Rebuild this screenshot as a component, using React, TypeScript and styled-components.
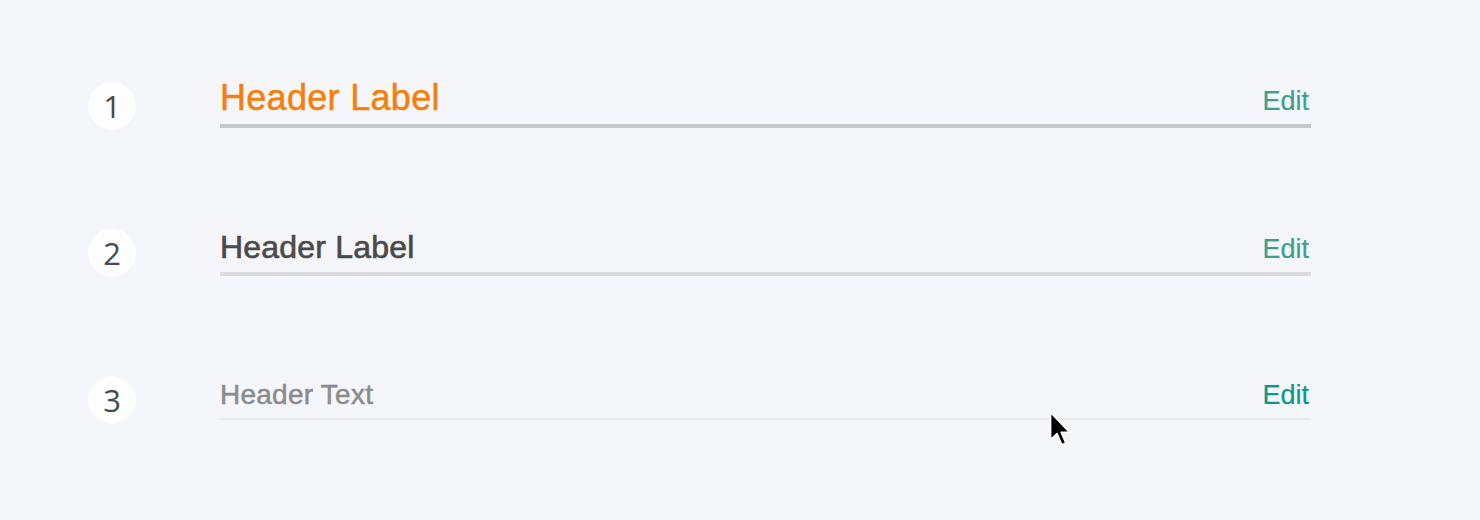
import React from "react";
import styled, { createGlobalStyle } from "styled-components";

const Global = createGlobalStyle`
  html, body {
    margin: 0;
    padding: 0;
    background: #f5f6fa;
  }
  body {
    font-family: "Liberation Sans", Arial, sans-serif;
    width: 1480px;
    height: 520px;
    overflow: hidden;
  }
`;

type Variant = "active" | "filled" | "empty";

const titleStyles: Record<
  Variant,
  { size: number; color: string; pb: number; border: number; line: string; edit: string; lift: number; stroke: number; ls: number }
> = {
  active: { size: 36, color: "#f57f0a", pb: 7.5, border: 4, line: "#c7c7c7", edit: "#3f9f8f", lift: 2.25, stroke: 0.5, ls: 0.3 },
  filled: { size: 32, color: "#4a4a4a", pb: 9, border: 4, line: "#dcdcdc", edit: "#3f9f8f", lift: -0.75, stroke: 0.65, ls: 0.2 },
  empty: { size: 28, color: "#8b8b8b", pb: 9.7, border: 2, line: "#eaeaea", edit: "#0c978a", lift: -0.5, stroke: 0.5, ls: 0.25 },
};

const Page = styled.div`
  position: relative;
  box-sizing: border-box;
  width: 1480px;
  height: 520px;
  padding: 32.5px 169px 0 88px;
  display: flex;
  flex-direction: column;
`;

const Row = styled.div`
  height: 147px;
  display: flex;
  align-items: center;
  gap: 84px;
`;

const StepCircle = styled.div`
  flex: 0 0 48px;
  width: 48px;
  height: 48px;
  border-radius: 50%;
  background: #fdfdfe;
  display: flex;
  align-items: center;
  justify-content: center;
  font-family: "Open Sans", "Noto Sans", sans-serif;
  font-size: 31px;
  color: #4a4a4a;
  line-height: 1;
`;

const Content = styled.div<{ $v: Variant }>`
  flex: 1;
  margin-bottom: ${(p) => Math.max(0, titleStyles[p.$v].lift * 2)}px;
  margin-top: ${(p) => Math.max(0, -titleStyles[p.$v].lift * 2)}px;
`;

const TitleRow = styled.div<{ $v: Variant }>`
  display: flex;
  justify-content: space-between;
  align-items: baseline;
  padding-bottom: ${(p) => titleStyles[p.$v].pb}px;
  border-bottom: ${(p) => titleStyles[p.$v].border}px solid ${(p) => titleStyles[p.$v].line};
`;

const Title = styled.span<{ $v: Variant }>`
  font-size: ${(p) => titleStyles[p.$v].size}px;
  line-height: 1;
  letter-spacing: ${(p) => titleStyles[p.$v].ls}px;
  color: ${(p) => titleStyles[p.$v].color};
  -webkit-text-stroke: ${(p) => titleStyles[p.$v].stroke}px currentColor;
`;

const EditLink = styled.a<{ $v: Variant }>`
  font-size: 27px;
  line-height: 1;
  margin-right: 2px;
  color: ${(p) => titleStyles[p.$v].edit};
  -webkit-text-stroke: 0.2px currentColor;
  text-decoration: none;
  cursor: pointer;
`;

const Cursor = styled.svg`
  position: absolute;
  left: 1046.5px;
  top: 409.6px;
  width: 26px;
  height: 37.8px;
  pointer-events: none;
`;

const steps: { n: number; text: string; v: Variant }[] = [
  { n: 1, text: "Header Label", v: "active" },
  { n: 2, text: "Header Label", v: "filled" },
  { n: 3, text: "Header Text", v: "empty" },
];

export default function App() {
  return (
    <>
      <Global />
      <Page>
        {steps.map((s) => (
          <Row key={s.n}>
            <StepCircle>{s.n}</StepCircle>
            <Content $v={s.v}>
              <TitleRow $v={s.v}>
                <Title $v={s.v}>{s.text}</Title>
                <EditLink $v={s.v}>Edit</EditLink>
              </TitleRow>
            </Content>
          </Row>
        ))}
        <Cursor viewBox="0 0 22 32">
          <path
            d="M3 2 L3 25 L8.5 20 L12.5 29.5 L16 28 L12 18.8 L19 18.8 Z"
            fill="#000"
            stroke="#fff"
            strokeWidth="1.4"
            strokeLinejoin="round"
          />
        </Cursor>
      </Page>
    </>
  );
}
